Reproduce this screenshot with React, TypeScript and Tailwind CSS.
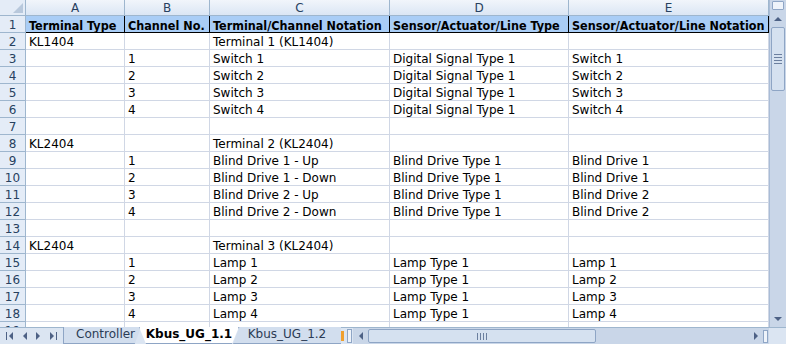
import React from "react";

const cols = [
  { key: "A", w: "w-[99px]" },
  { key: "B", w: "w-[85px]" },
  { key: "C", w: "w-[180px]" },
  { key: "D", w: "w-[179px]" },
  { key: "E", w: "w-[200px]" },
];

const header = [
  "Terminal Type",
  "Channel No.",
  "Terminal/Channel Notation",
  "Sensor/Actuator/Line Type",
  "Sensor/Actuator/Line Notation",
];

const rows: string[][] = [
  ["KL1404", "", "Terminal 1 (KL1404)", "", ""],
  ["", "1", "Switch 1", "Digital Signal Type 1", "Switch 1"],
  ["", "2", "Switch 2", "Digital Signal Type 1", "Switch 2"],
  ["", "3", "Switch 3", "Digital Signal Type 1", "Switch 3"],
  ["", "4", "Switch 4", "Digital Signal Type 1", "Switch 4"],
  ["", "", "", "", ""],
  ["KL2404", "", "Terminal 2 (KL2404)", "", ""],
  ["", "1", "Blind Drive 1 - Up", "Blind Drive Type 1", "Blind Drive 1"],
  ["", "2", "Blind Drive 1 - Down", "Blind Drive Type 1", "Blind Drive 1"],
  ["", "3", "Blind Drive 2 - Up", "Blind Drive Type 1", "Blind Drive 2"],
  ["", "4", "Blind Drive 2 - Down", "Blind Drive Type 1", "Blind Drive 2"],
  ["", "", "", "", ""],
  ["KL2404", "", "Terminal 3 (KL2404)", "", ""],
  ["", "1", "Lamp 1", "Lamp Type 1", "Lamp 1"],
  ["", "2", "Lamp 2", "Lamp Type 1", "Lamp 2"],
  ["", "3", "Lamp 3", "Lamp Type 1", "Lamp 3"],
  ["", "4", "Lamp 4", "Lamp Type 1", "Lamp 4"],
  ["", "", "", "", ""],
];

const Arrow = ({ dir }: { dir: "up" | "down" | "left" | "right" }) => {
  const pts = {
    up: "1,6 5,2 9,6",
    down: "1,2 5,6 9,2",
    left: "6,1 2,5 6,9",
    right: "2,1 6,5 2,9",
  }[dir];
  const vb = dir === "up" || dir === "down" ? "0 0 10 8" : "0 0 8 10";
  const size = dir === "up" || dir === "down" ? "w-[10px] h-[8px]" : "w-[8px] h-[10px]";
  return (
    <svg viewBox={vb} className={size}>
      <polygon points={pts} fill="#4d6185" />
    </svg>
  );
};

const VScroll = () => (
  <div className="w-[17px] h-full flex flex-col bg-[#c9d6e8] border-l border-[#a9bcd6]">
    <div className="h-[9px] mx-[2px] mt-[1px] bg-[#eef3fa] border border-[#8fa6c6] rounded-[1px]" />
    <div className="h-[16px] flex items-center justify-center mt-[1px]">
      <Arrow dir="up" />
    </div>
    <div className="h-[64px] mx-[1px] bg-[#d5e1f0] border border-[#8ea5c5] rounded-[2px] flex items-center justify-center">
      <div className="flex flex-col gap-[2px]">
        <div className="w-[8px] h-px bg-[#6b7f9f]" />
        <div className="w-[8px] h-px bg-[#6b7f9f]" />
        <div className="w-[8px] h-px bg-[#6b7f9f]" />
        <div className="w-[8px] h-px bg-[#6b7f9f]" />
      </div>
    </div>
    <div className="flex-1" />
    <div className="h-[17px] flex items-center justify-center">
      <Arrow dir="down" />
    </div>
  </div>
);

const Sheet = () => (
  <div className="w-[769px] h-full overflow-hidden bg-white">
    {/* column letters */}
    <div className="flex h-[16px]">
      <div className="w-[26px] shrink-0 bg-[#e4ecf7] border-r border-b border-[#9eb6ce] flex items-end justify-end p-[2px]">
        <svg viewBox="0 0 10 10" className="w-[10px] h-[10px]">
          <polygon points="10,0 10,10 0,10" fill="#b8c8dc" />
        </svg>
      </div>
      {cols.map((c) => (
        <div
          key={c.key}
          className={`${c.w} shrink-0 bg-gradient-to-b from-[#f1f5fb] to-[#dbe6f4] border-r border-b border-[#9eb6ce] text-center text-[12px] leading-[17px] text-[#27415f]`}
        >
          {c.key}
        </div>
      ))}
    </div>
    {/* header row 1 */}
    <div className="flex h-[17px]">
      <div className="w-[26px] shrink-0 bg-[#e4ecf7] border-r border-b border-[#9eb6ce] text-center text-[12px] leading-[19px] text-[#27415f]">
        1
      </div>
      {cols.map((c, i) => (
        <div
          key={c.key}
          className={`${c.w} shrink-0 bg-[#a9cdf6] border-r border-b border-black px-[3px] font-bold font-['DejaVu_Sans_Condensed','Liberation_Sans',sans-serif] text-[12.5px] leading-[19px] text-black whitespace-nowrap overflow-hidden`}
        >
          {header[i]}
        </div>
      ))}
    </div>
    {rows.map((r, ri) => (
      <div key={ri} className="flex h-[17px]">
        <div className="w-[26px] shrink-0 bg-[#e4ecf7] border-r border-b border-[#9eb6ce] text-center text-[12px] leading-[19px] text-[#27415f]">
          {ri + 2}
        </div>
        {cols.map((c, ci) => (
          <div
            key={c.key}
            className={`${c.w} shrink-0 border-r border-b border-[#d0d7e5] px-[3px] text-[12px] leading-[19px] text-black whitespace-nowrap overflow-x-clip`}
          >
            {r[ci]}
          </div>
        ))}
      </div>
    ))}
  </div>
);

const TabBar = () => (
  <div className="h-[17px] flex bg-[#dbe5f2] border-t border-[#9eb6ce] text-[12px] leading-[15px]">
    <div className="w-[63px] shrink-0 flex items-center justify-around px-[3px] text-[#4d6185]">
      <div className="flex items-center">
        <div className="w-px h-[8px] bg-[#4d6185]" />
        <Arrow dir="left" />
      </div>
      <Arrow dir="left" />
      <Arrow dir="right" />
      <div className="flex items-center">
        <Arrow dir="right" />
        <div className="w-px h-[8px] bg-[#4d6185]" />
      </div>
    </div>
    <div className="w-[78px] shrink-0 -mt-px bg-[#d2deee] border border-[#8ea5c5] border-t-0 [clip-path:polygon(0_0,100%_0,92%_100%,0_100%)] text-[#2b3b55] pl-[12px]">
      Controller
    </div>
    <div className="w-[100px] shrink-0 -ml-[2px] -mt-px bg-white border-x border-b border-[#8ea5c5] [clip-path:polygon(0_0,100%_0,93%_100%,7%_100%)] font-bold text-black text-center">
      Kbus_UG_1.1
    </div>
    <div className="w-[108px] shrink-0 -ml-[6px] -mt-px bg-[#d2deee] border-b border-[#8ea5c5] [clip-path:polygon(6%_0,100%_0,100%_100%,0_100%)] text-[#2b3b55] text-center">
      Kbus_UG_1.2
    </div>
    <div className="w-[6px] shrink-0 flex items-center">
      <div className="w-[3px] h-[10px] bg-[#f0a030]" />
    </div>
    <div className="w-[5px] shrink-0 my-[1px] bg-[#eef3fa] border border-[#8fa6c6]" />
    <div className="flex-1 flex items-center bg-[#c9d6e8] ml-[1px]">
      <div className="w-[15px] flex items-center justify-center">
        <Arrow dir="left" />
      </div>
      <div className="w-[228px] h-[14px] bg-[#d5e1f0] border border-[#8ea5c5] rounded-[2px] flex items-center justify-center">
        <div className="flex gap-[2px]">
          <div className="w-px h-[7px] bg-[#6b7f9f]" />
          <div className="w-px h-[7px] bg-[#6b7f9f]" />
          <div className="w-px h-[7px] bg-[#6b7f9f]" />
          <div className="w-px h-[7px] bg-[#6b7f9f]" />
        </div>
      </div>
      <div className="flex-1" />
      <div className="w-[15px] flex items-center justify-center">
        <Arrow dir="right" />
      </div>
      <div className="w-[5px] h-[13px] mr-[1px] bg-[#eef3fa] border border-[#8fa6c6]" />
    </div>
    <div className="w-[17px] shrink-0 bg-[#dbe5f2]" />
  </div>
);

export default function App() {
  return (
    <div className="w-[786px] h-[344px] flex flex-col overflow-hidden bg-white font-['DejaVu_Sans',sans-serif]">
      <div className="h-[327px] flex overflow-hidden">
        <Sheet />
        <VScroll />
      </div>
      <TabBar />
    </div>
  );
}
